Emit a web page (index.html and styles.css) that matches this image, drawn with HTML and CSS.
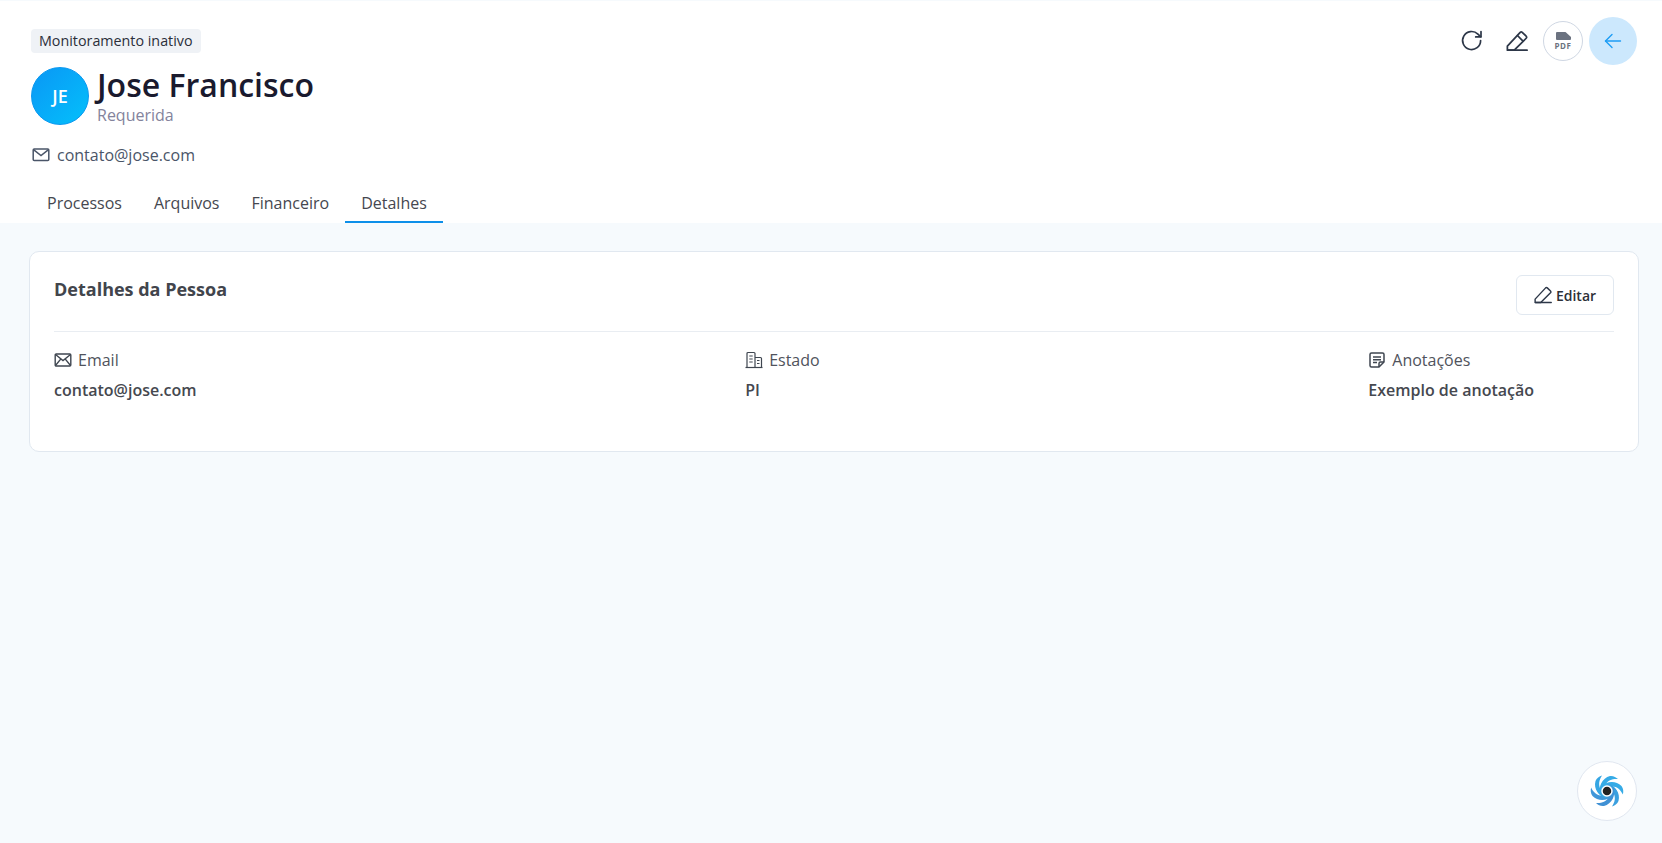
FILE: index.html
```html
<!DOCTYPE html>
<html lang="pt-BR">
<head>
    <meta charset="UTF-8">
    <meta name="viewport" content="width=device-width, initial-scale=1.0">
    <title>Jose Francisco</title>
    <link rel="stylesheet" href="styles.css">
</head>
<body>

    <header class="header">
        <div class="header-top">
            <div class="person">
                <span class="badge">Monitoramento inativo</span>
                <div class="person-main">
                    <div class="avatar">JE</div>
                    <div class="person-name">
                        <h1>Jose Francisco</h1>
                        <span class="role">Requerida</span>
                    </div>
                </div>
                <div class="contact">
                    <svg width="18" height="18" viewBox="0 0 18 18" fill="none" stroke="#4a5568" stroke-width="1.5">
                        <rect x="1.2" y="3" width="15.6" height="11.6" rx="1"/>
                        <path d="M1.5 3.6 9 9.6l7.5-6"/>
                    </svg>
                    <span>contato@jose.com</span>
                </div>
            </div>

            <div class="actions">
                <button class="icon-btn">
                    <svg width="24" height="24" viewBox="0 0 24 24" fill="none" stroke="#2d3748" stroke-width="1.7" stroke-linecap="round" stroke-linejoin="round">
                        <path d="M20.6 11.5a9 9 0 1 1-2.7-6.4l2.7 2.6"/>
                        <path d="M21 2.6v5.3h-5.3"/>
                    </svg>
                </button>
                <button class="icon-btn">
                    <svg width="22" height="22" viewBox="0 0 24 24" fill="none" stroke="#2d3748" stroke-width="1.900" stroke-linecap="round" stroke-linejoin="round">
                        <path d="M2 22h21"/>
                        <path d="M1.500 22v-4.500L15.500 2.500a1.600 1.600 0 0 1 2.200 0l4.300 4.300a1.600 1.600 0 0 1 0 2.200L9 22z"/>
                        <path d="m12.500 6 5.500 5.500"/>
                    </svg>
                </button>
                <button class="pdf-btn">
                    <svg width="15" height="8" viewBox="0 0 15 8" fill="#6b7280">
                        <path d="M1 0h8.500L15 5v2a1 1 0 0 1-1 1H1a1 1 0 0 1-1-1V1a1 1 0 0 1 1-1z"/>
                    </svg>
                    <span>PDF</span>
                </button>
                <button class="back-btn">
                    <svg width="20" height="20" viewBox="0 0 20 20" fill="none" stroke="#1c9cf5" stroke-width="1.4" stroke-linecap="round" stroke-linejoin="round">
                        <path d="M2.500 10h15"/>
                        <path d="M9 3.500 2.500 10 9 16.500"/>
                    </svg>
                </button>
            </div>
        </div>

        <nav class="tabs">
            <a class="tab">Processos</a>
            <a class="tab">Arquivos</a>
            <a class="tab">Financeiro</a>
            <a class="tab active">Detalhes</a>
        </nav>
    </header>

    <main class="content">
        <section class="card">
            <div class="card-head">
                <h2>Detalhes da Pessoa</h2>
                <button class="edit-btn">
                    <svg width="18" height="18" viewBox="0 0 24 24" fill="none" stroke="#2d3748" stroke-width="1.900" stroke-linecap="round" stroke-linejoin="round">
                        <path d="M2 22h21"/>
                        <path d="M1.500 22v-4.500L15.500 2.500a1.600 1.600 0 0 1 2.200 0l4.300 4.300a1.600 1.600 0 0 1 0 2.200L9 22z"/>
                    </svg>
                    Editar
                </button>
            </div>

            <div class="fields">
                <div class="field">
                    <div class="field-label">
                        <svg width="18" height="18" viewBox="0 0 18 18" fill="none" stroke="#3f4650" stroke-width="1.400">
                            <rect x="1.200" y="3" width="15.600" height="12" rx="1"/>
                            <path d="M1.500 3.500 9 9.500l7.500-6M1.500 14.500l5.400-6.600M16.500 14.500l-5.400-6.600"/>
                        </svg>
                        Email
                    </div>
                    <div class="field-value">contato@jose.com</div>
                </div>
                <div class="field">
                    <div class="field-label">
                        <svg width="18" height="18" viewBox="0 0 18 18" fill="none" stroke="#3f4650" stroke-width="1.200">
                            <path d="M.5 16.500h17"/>
                            <path d="M2 16.500V2.500a1 1 0 0 1 1-1h6a1 1 0 0 1 1 1v14"/>
                            <path d="M10 6.500h5.500a1 1 0 0 1 1 1v9"/>
                            <path d="M4.300 5h3.400M4.300 8h3.400M4.300 11h3.400M12 9.500h2.500M12 12.500h2.500"/>
                        </svg>
                        Estado
                    </div>
                    <div class="field-value">PI</div>
                </div>
                <div class="field">
                    <div class="field-label">
                        <svg width="18" height="18" viewBox="0 0 18 18" fill="none" stroke="#3f4650" stroke-width="1.500" stroke-linejoin="round">
                            <path d="M11 16H3.500A1.500 1.500 0 0 1 2 14.500v-11A1.500 1.500 0 0 1 3.500 2h11A1.500 1.500 0 0 1 16 3.500V11z"/>
                            <path d="M11 16v-3.500a1.500 1.500 0 0 1 1.500-1.500H16"/>
                            <path d="M5 6h8M5 8.800h8M5 11.600h4"/>
                        </svg>
                        Anotações
                    </div>
                    <div class="field-value">Exemplo de anotação</div>
                </div>
            </div>
        </section>
    </main>

    <button class="assistant">
        <svg width="36" height="36" viewBox="-18 -18 36 36">
            <path fill="#36abe6" d="M-6.500 3C-9-4-5-13 3-15 6-15.500 9-14 11-12 6-12.500 1-11-1.500-6.500L-4 0C-5 2-6 4-6.500 3Z"/>
            <path fill="#36abe6" transform="rotate(60)" d="M-6.500 3C-9-4-5-13 3-15 6-15.500 9-14 11-12 6-12.500 1-11-1.500-6.500L-4 0C-5 2-6 4-6.500 3Z"/>
            <path fill="#3ba0df" transform="rotate(120)" d="M-6.500 3C-9-4-5-13 3-15 6-15.500 9-14 11-12 6-12.500 1-11-1.500-6.500L-4 0C-5 2-6 4-6.500 3Z"/>
            <path fill="#3f90d4" transform="rotate(180)" d="M-6.500 3C-9-4-5-13 3-15 6-15.500 9-14 11-12 6-12.500 1-11-1.500-6.500L-4 0C-5 2-6 4-6.500 3Z"/>
            <path fill="#3f96d9" transform="rotate(240)" d="M-6.500 3C-9-4-5-13 3-15 6-15.500 9-14 11-12 6-12.500 1-11-1.500-6.500L-4 0C-5 2-6 4-6.500 3Z"/>
            <path fill="#36a6e3" transform="rotate(300)" d="M-6.500 3C-9-4-5-13 3-15 6-15.500 9-14 11-12 6-12.500 1-11-1.500-6.500L-4 0C-5 2-6 4-6.500 3Z"/>
            <circle r="5" fill="#222" stroke="#fff" stroke-width="1.500"/>
        </svg>
    </button>

</body>
</html>
```

FILE: styles.css
```css
* {
    box-sizing: border-box;
}

html, body {
    height: 100%;
    overflow: hidden;
}

body {
    font-family: "Open Sans", Arial, sans-serif;
    margin: 0;
    padding-top: 1px;
    background-color: #f6fafd;
    color: #3f4248;
    position: relative;
}

button {
    font-family: inherit;
    cursor: pointer;
}

/* Cabecalho */
.header {
    background-color: #fff;
    height: 222px;
    padding: 16px 17px 0 31px;
    display: flex;
    flex-direction: column;
    justify-content: space-between;
}

.header-top {
    display: flex;
    justify-content: space-between;
    align-items: flex-start;
}

.person {
    padding-top: 12px;
}

.badge {
    display: block;
    width: fit-content;
    background-color: #eff2f6;
    border-radius: 4px;
    padding: 0 8px;
    height: 24px;
    line-height: 24px;
    font-size: 14.3px;
    color: #2b2f3a;
}

.person-main {
    display: flex;
    gap: 8px;
    margin-top: 14px;
}

.avatar {
    width: 58px;
    height: 58px;
    border-radius: 50%;
    border: 1px solid #0a98f0;
    background: linear-gradient(135deg, #0a97f5, #04c0fb);
    color: #fff;
    font-size: 18px;
    font-weight: 600;
    display: flex;
    align-items: center;
    justify-content: center;
}

.person-name h1 {
    margin: 0;
    font-size: 32px;
    line-height: 36px;
    font-weight: 600;
    color: #1a1a2e;
}

.role {
    display: block;
    margin-top: 1px;
    font-size: 16px;
    line-height: 22px;
    color: #83839c;
}

.contact {
    display: flex;
    align-items: center;
    gap: 7px;
    margin-top: 18px;
    padding-left: 1px;
    font-size: 16px;
    line-height: 22px;
    color: #4a5568;
}

.actions {
    display: flex;
    align-items: center;
    gap: 6px;
    margin-right: 8px;
}

.icon-btn {
    width: 44px;
    height: 44px;
    border: none;
    background: none;
    padding: 0;
    display: flex;
    align-items: center;
    justify-content: center;
}

.icon-btn + .icon-btn {
    margin-left: -5px;
}

.pdf-btn {
    width: 40px;
    height: 40px;
    border: 1px solid #cfd7e3;
    border-radius: 50%;
    background: #fff;
    padding: 0;
    display: flex;
    flex-direction: column;
    align-items: center;
    justify-content: center;
    margin-left: -2px;
    gap: 1px;
}

.pdf-btn span {
    font-size: 8px;
    line-height: 9px;
    font-weight: 700;
    letter-spacing: .5px;
    color: #6b7280;
}

.back-btn {
    width: 48px;
    height: 48px;
    border: none;
    border-radius: 50%;
    background-color: #cce8fd;
    display: flex;
    align-items: center;
    justify-content: center;
    padding: 0;
}

/* Abas */
.tabs {
    display: flex;
}

.tab {
    height: 41px;
    padding: 5px 16px 0;
    font-size: 16px;
    line-height: 32px;
    color: #45474f;
}

.tab.active {
    border-bottom: 2px solid #0d8fe9;
}

.content {
    padding: 28px 23px 0 29px;
}

.card {
    height: 201px;
    background-color: #fff;
    border: 1px solid #e1e8f0;
    border-radius: 10px;
    padding: 23px 24px 0;
}

.card-head {
    display: flex;
    justify-content: space-between;
    align-items: flex-start;
    padding-bottom: 16px;
    border-bottom: 1px solid #e9edf2;
}

.card-head h2 {
    margin: 2px 0 0;
    font-size: 18px;
    line-height: 24px;
    font-weight: 700;
    color: #42454c;
}

.edit-btn {
    width: 98px;
    height: 40px;
    background: #fff;
    border: 1px solid #e1e8f0;
    border-radius: 6px;
    font-size: 14px;
    font-weight: 600;
    color: #2d3038;
    display: flex;
    align-items: center;
    justify-content: center;
    gap: 4px;
    padding: 0;
}

.fields {
    display: flex;
    justify-content: space-between;
    padding-top: 16px;
    padding-right: 80px;
}

.field-label {
    display: flex;
    align-items: center;
    gap: 6px;
    font-size: 16px;
    line-height: 24px;
    color: #50535c;
}

.field-value {
    margin-top: 7px;
    font-size: 16px;
    line-height: 22px;
    font-weight: 600;
    color: #45484f;
}

/* Assistente */
.assistant {
    position: absolute;
    right: 25px;
    bottom: 22px;
    width: 60px;
    height: 60px;
    border: 1px solid #e1e7f0;
    border-radius: 50%;
    background: #fff;
    display: flex;
    align-items: center;
    justify-content: center;
    padding: 0;
}
```
